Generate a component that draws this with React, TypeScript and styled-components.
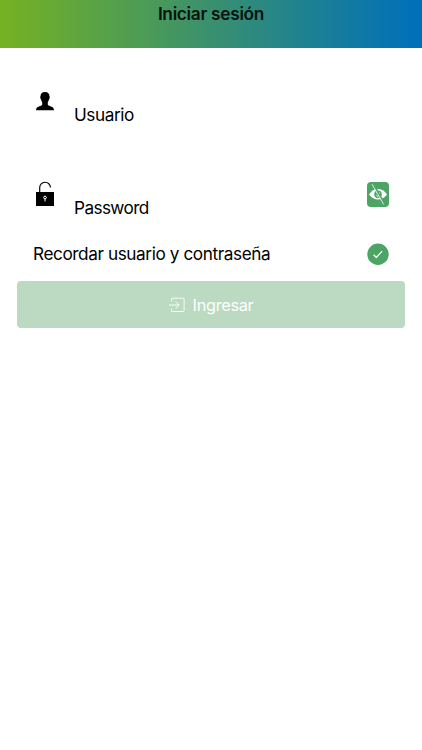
import React from "react";
import styled, { createGlobalStyle } from "styled-components";

const GlobalStyle = createGlobalStyle`
  * { box-sizing: border-box; }
  body { margin: 0; background: #fff; }
`;

const Screen = styled.main`
  min-height: 750px;
  background: #fff;
  color: #000;
  font-family: Inter, "Liberation Sans", sans-serif;
`;

const Header = styled.header`
  height: 48px;
  padding-top: 3px;
  background: linear-gradient(90deg, #75b222 0%, #0070b9 98%);
  text-align: center;
`;

const Title = styled.h1`
  margin: 0;
  font-size: 17.3px;
  line-height: 22px;
  font-weight: 600;
  letter-spacing: -0.3px;
  color: #07130d;
`;

const Form = styled.form`
  display: flex;
  flex-direction: column;
  padding: 43px 17px 0;
`;

const Field = styled.div<{ $height: number }>`
  display: flex;
  align-items: flex-start;
  height: ${(p) => p.$height}px;
  padding: 0 16px 0 19px;
`;

const Label = styled.label<{ $spacing: number; $top?: number }>`
  flex: 1;
  padding-top: ${(p) => p.$top ?? 0}px;
  font-size: 17.2px;
  line-height: 22px;
  letter-spacing: ${(p) => p.$spacing}px;
  white-space: nowrap;
`;

const FieldIcon = styled.svg`
  flex: none;
  width: 18px;
  height: 26px;
  margin-right: 20px;
`;

const EyeButton = styled.button`
  width: 22px;
  height: 25px;
  margin-top: 0.5px;
  padding: 0;
  border: 0;
  border-radius: 4px;
  background: #4da565;
  svg { display: block; }
`;

const RememberRow = styled.div`
  display: flex;
  align-items: center;
  height: 46px;
  margin-bottom: 4px;
  padding: 0 16px;
`;

const SubmitButton = styled.button`
  display: flex;
  align-items: center;
  justify-content: center;
  gap: 8px;
  height: 47px;
  padding: 1px 0 0;
  border: 0;
  border-radius: 4px;
  background: #bbdac1;
  color: #fff;
  font: 400 16.3px/22px Inter, sans-serif;
  letter-spacing: -0.3px;
`;

export default function App() {
  return (
    <Screen>
      <GlobalStyle />
      <Header>
        <Title>Iniciar sesión</Title>
      </Header>
      <Form>
        <Field $height={90}>
          <FieldIcon viewBox="0 0 18 26">
            <path d="M9 .9C6 .9 4.400 2.700 4.500 5.600c-.6.1-.3 2 .4 2.500.2 1.300.7 2.300 1.300 3v2.700c-.5.900-1.800 1.200-3.200 1.600C1.200 15.900.1 16.800 0 19.300h18c-.1-2.500-1.200-3.400-3-3.900-1.400-.4-2.700-.7-3.200-1.600v-2.700c.6-.7 1.100-1.700 1.300-3 .7-.5 1-2.400.4-2.500C13.600 2.700 12 .9 9 .9Z" />
          </FieldIcon>
          <Label $spacing={-0.45} $top={13}>Usuario</Label>
        </Field>
        <Field $height={50}>
          <FieldIcon viewBox="0 0 18 26">
            <path d="M3.700 12V6.800a5.400 5.400 0 0 1 10.800-.3" fill="none" stroke="#000" strokeWidth="1.150" />
            <path d="M0 11h18v14H0z" />
            <circle cx="9" cy="16.500" r="1.350" fill="none" stroke="#fff" strokeWidth="1" />
            <path d="M9 17.700v2.700" stroke="#fff" strokeWidth="1" />
          </FieldIcon>
          <Label $spacing={-0.6} $top={16}>Password</Label>
          <EyeButton type="button" aria-label="Mostrar u ocultar">
            <svg width="22" height="25" viewBox="0 0 22 25">
              <path d="M2 12.500C7 5.300 15 5.300 20 12.500 15 19.300 7 19.300 2 12.500Z" fill="#fff" />
              <circle cx="11" cy="12.300" r="3.800" fill="#4da565" />
              <path d="M9.500 10.500c1.400-1.400 3.500-.3 3.400 1.700M9.300 12.800c.3 1.200 1.300 1.700 2.200 1.600" fill="none" stroke="#fff" strokeWidth=".8" />
              <path d="M6 1.700 17.800 22" stroke="#4da565" strokeWidth="1.600" />
              <path d="M5 2.200 16.700 22.500" stroke="#e6f3e9" strokeWidth=".9" />
            </svg>
          </EyeButton>
        </Field>
        <RememberRow>
          <Label $spacing={-0.41}>Recordar usuario y contraseña</Label>
          <svg width="22" height="22" viewBox="0 0 22 22">
            <circle cx="11" cy="11.300" r="10.700" fill="#4da565" />
            <path d="m6.600 11.800 2.700 2.700 5.800-6.300" fill="none" stroke="#fff" strokeWidth="1.250" />
          </svg>
        </RememberRow>
        <SubmitButton type="button">
          <svg width="16" height="16" viewBox="0 0 16 16" fill="none" stroke="#fff" strokeWidth=".9">
            <path d="M2.500 4.500V2q0-.8.800-.8h11q.8 0 .8.800v11.700q0 .8-.8.800h-11q-.8 0-.8-.8v-2.200M0 8h10M6.700 4.400 10.300 8l-3.600 3.600" />
          </svg>
          Ingresar
        </SubmitButton>
      </Form>
    </Screen>
  );
}
